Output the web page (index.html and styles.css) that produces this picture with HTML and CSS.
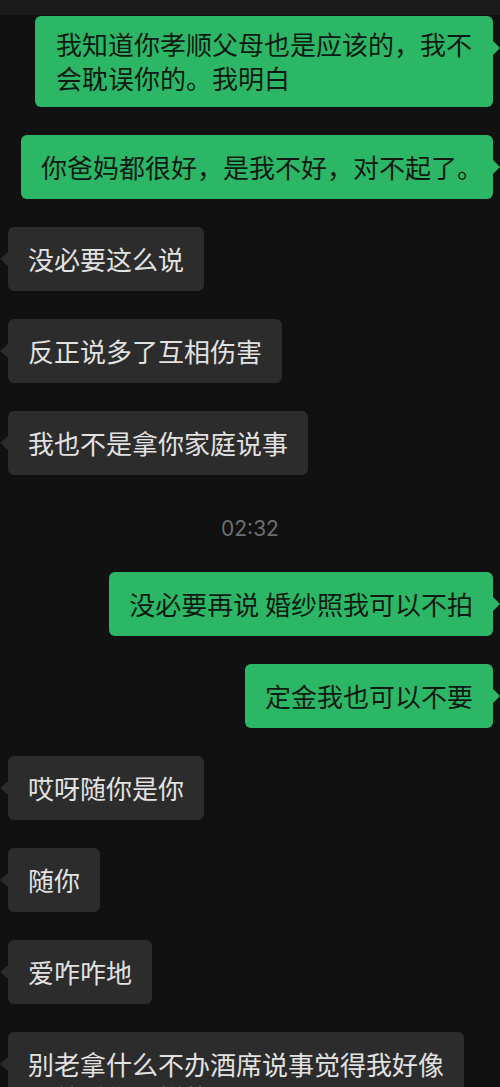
FILE: index.html
```html
<!DOCTYPE html>
<html lang="zh-CN">
    <head>
        <meta charset="UTF-8">
        <meta name="viewport" content="width=device-width, initial-scale=1.0">
        <title>聊天记录</title>
        <link rel="stylesheet" href="styles.css">
    </head>
<body>
    <div class="strip"></div>
    <div class="chat">
        <div class="row mine">
            <div class="bubble first">我知道你孝顺父母也是应该的，我不<br>会耽误你的。我明白</div>
        </div>
        <div class="row mine">
            <div class="bubble tight">你爸妈都很好，是我不好，对不起了。</div>
        </div>
        <div class="row">
            <div class="bubble">没必要这么说</div>
        </div>
        <div class="row">
            <div class="bubble">反正说多了互相伤害</div>
        </div>
        <div class="row">
            <div class="bubble">我也不是拿你家庭说事</div>
        </div>

        <div class="time">02:32</div>

        <div class="row mine">
            <div class="bubble">没必要再说 婚纱照我可以不拍</div>
        </div>
        <div class="row mine">
            <div class="bubble">定金我也可以不要</div>
        </div>
        <div class="row">
            <div class="bubble">哎呀随你是你</div>
        </div>
        <div class="row">
            <div class="bubble">随你</div>
        </div>
        <div class="row">
            <div class="bubble">爱咋咋地</div>
        </div>
        <div class="row">
            <div class="bubble">别老拿什么不办酒席说事觉得我好像<br>不尊重你一样的</div>
        </div>
    </div>
</body>
</html>
```

FILE: styles.css
```css
body {
    margin: 0;
    background-color: #111111;
    font-family: "Noto Sans CJK SC", "Noto Sans", sans-serif;
}
.strip {
    height: 15px;
    margin-bottom: 1px;
    background-color: #1a1a1a;
}
.chat {
    display: flex;
    flex-direction: column;
    gap: 28px;
}
.row {
    display: flex;
    padding: 0 7px 0 8px;
}
.row.mine {
    justify-content: flex-end;
}
.bubble {
    position: relative;
    padding: 15px 20px;
    font-size: 26px;
    line-height: 34px;
    border-radius: 6px;
    background-color: #2c2c2c;
    color: #e2e2e2;
}
.bubble::after {
    content: "";
    position: absolute;
    top: 25px;
    left: -8px;
    border-top: 7px solid transparent;
    border-bottom: 7px solid transparent;
    border-right: 8px solid #2c2c2c;
}
.mine .bubble {
    background-color: #2bb766;
    color: #0e1a12;
}
.mine .bubble::after {
    left: auto;
    right: -7px;
    border-right: none;
    border-left: 7px solid #2bb766;
}
.bubble.first {
    padding: 11px 21px 12px 21px;
}
.bubble.tight {
    padding-right: 10px;
}
.time {
    padding: 16px 0 5px;
    text-align: center;
    font-family: Inter, "Noto Sans", sans-serif;
    font-size: 21px;
    line-height: 20px;
    color: #6e6e6e;
}
```
